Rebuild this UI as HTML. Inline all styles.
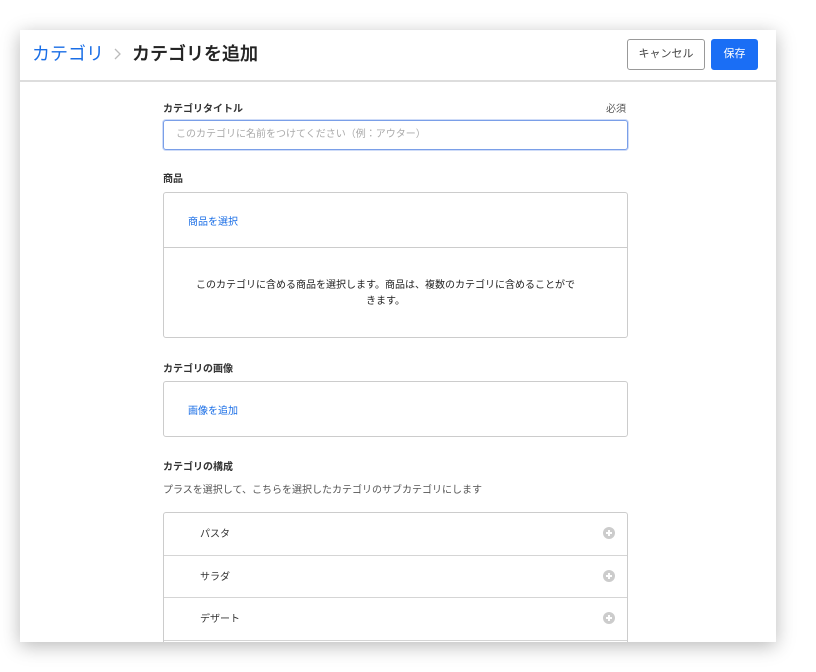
<!DOCTYPE html>
<html><head><meta charset="utf-8"><style>
*{box-sizing:border-box;margin:0;padding:0}
body{width:816px;height:672px;background:#fff;font-family:"Liberation Sans","Noto Sans CJK JP",sans-serif;position:relative;overflow:hidden;color:#333}
.card{position:absolute;left:20px;top:30px;width:756px;height:612px;background:#fff;box-shadow:0 4px 18px rgba(0,0,0,.28);overflow:hidden}
.hdr{position:absolute;left:0;top:0;width:756px;height:52px;border-bottom:2px solid #ddd}
.bc{position:absolute;left:12px;top:12px;font-size:18px;line-height:24px;display:flex;align-items:center}
.bc .a{color:#1a6ee6}.bc .b{color:#222;font-weight:500;-webkit-text-stroke:0.3px #222}
.btn{position:absolute;top:9px;height:31px;border-radius:3px;font-size:11px;line-height:29px;text-align:center}
.cancel{left:607px;width:78px;border:1px solid #999;color:#444;background:#fff}
.save{left:691px;width:47px;background:#1a6ef5;color:#fff;border:1px solid #1a6ef5}
.lbl{position:absolute;left:143px;font-size:10px;font-weight:bold;color:#333}
.box{position:absolute;left:143px;width:465px;border:1px solid #ccc;border-radius:3px;background:#fff}
.link{position:absolute;left:24px;font-size:10px;color:#1a6ee6}
.row{height:42.5px;border-bottom:1px solid #d5d5d5;position:relative;font-size:10px;line-height:44px;padding-left:36px;color:#333}
.plus{position:absolute;right:12px;top:14px;width:12px;height:12px;border-radius:50%;background:#ccc}
.plus:before,.plus:after{content:"";position:absolute;background:#fff}
.plus:before{left:3px;top:5px;width:6px;height:2px}.plus:after{left:5px;top:3px;width:2px;height:6px}
</style></head><body>
<div class="card">
<div class="hdr">
<div class="bc"><span class="a">カテゴリ</span><svg width="28" height="24" viewBox="0 0 28 24"><path d="M11 7l5 5-5 5" fill="none" stroke="#bbb" stroke-width="1.3"/></svg><span class="b">カテゴリを追加</span></div>
<div class="btn cancel">キャンセル</div><div class="btn save">保存</div>
</div>
<div class="lbl" style="top:70px">カテゴリタイトル</div>
<div style="position:absolute;left:586px;top:70px;font-size:10px;color:#555">必須</div>
<div class="box" style="top:90px;height:30px;border:1px solid #7a9fe8;box-shadow:0 0 0 1px #cfdcf8;font-size:10px;color:#aaa;line-height:28px;padding-left:12px">このカテゴリに名前をつけてください（例：アウター）</div>
<div class="lbl" style="top:140px">商品</div>
<div class="box" style="top:162px;height:146px">
<div class="link" style="top:20px">商品を選択</div>
<div style="position:absolute;left:0;top:54px;width:463px;border-top:1px solid #ccc"></div>
<div style="position:absolute;left:10px;top:85px;width:423px;text-align:center;font-size:10px;line-height:16px;color:#222">このカテゴリに含める商品を選択します。商品は、複数のカテゴリに含めることがで<br>きます。</div>
</div>
<div class="lbl" style="top:330px">カテゴリの画像</div>
<div class="box" style="top:351px;height:56px"><div class="link" style="top:20px">画像を追加</div></div>
<div class="lbl" style="top:428px">カテゴリの構成</div>
<div style="position:absolute;left:143px;top:451px;font-size:10px;color:#555">プラスを選択して、こちらを選択したカテゴリのサブカテゴリにします</div>
<div class="box" style="top:482px;height:160px;border-bottom:none">
<div class="row">パスタ<span class="plus"></span></div>
<div class="row">サラダ<span class="plus"></span></div>
<div class="row">デザート<span class="plus"></span></div>
</div>
</div>
</body></html>
